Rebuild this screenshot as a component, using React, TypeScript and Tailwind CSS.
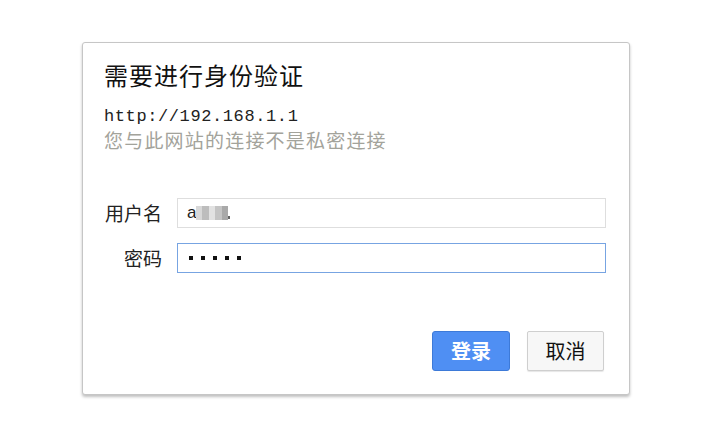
import React from "react";

export default function App() {
  const cjk = { fontFamily: '"Noto Sans CJK SC", "Noto Sans", sans-serif' };
  return (
    <div className="w-[707px] h-[439px] bg-white overflow-hidden pt-[42px] pl-[82px]" style={cjk}>
      <div className="w-[548px] h-[353px] bg-white border border-[#c6c6c6] rounded-[3px] shadow-[0_2px_3px_rgba(0,0,0,0.25)] pt-[16px] pl-[21px] pr-[22px] flex flex-col">
        <div className="text-[24px] leading-[32px] text-[#111] tracking-[1px]">需要进行身份验证</div>
        <div className="mt-[17px] text-[17px] leading-[18px] text-[#222] tracking-[0.6px]" style={{ fontFamily: '"Liberation Mono", monospace' }}>
          http://192.168.1.1
        </div>
        <div className="mt-[2px] text-[19px] leading-[24px] text-[#a3a39b] tracking-[1.2px]">您与此网站的连接不是私密连接</div>
        <div className="mt-[46px] flex items-center">
          <div className="w-[58px] text-right text-[19px] leading-[24px] text-[#222]">用户名</div>
          <div className="ml-[15px] w-[429px] h-[30px] border border-[#dedede] bg-white flex items-center pl-[9px]">
            <span className="text-[17px] text-[#222]" style={{ fontFamily: '"Liberation Sans", sans-serif' }}>a</span>
            <span className="w-[6px] h-[14px] bg-[#d8d8d8]"></span>
            <span className="w-[7px] h-[14px] bg-[#bdbdbd]"></span>
            <span className="w-[6px] h-[14px] bg-[#e2e2e2]"></span>
            <span className="w-[7px] h-[14px] bg-[#c4c4c4]"></span>
            <span className="w-[6px] h-[14px] bg-[#a9a9a9]"></span>
            <span className="w-[2px] h-[3px] bg-[#666] self-end mb-[8px]"></span>
          </div>
        </div>
        <div className="mt-[15px] flex items-center">
          <div className="w-[58px] text-right text-[19px] leading-[24px] text-[#222]">密码</div>
          <div className="ml-[15px] w-[429px] h-[30px] border border-[#77a4e2] bg-white flex items-center pl-[11px] gap-[8px]">
            <span className="w-[4px] h-[4px] bg-[#111]"></span>
            <span className="w-[4px] h-[4px] bg-[#111]"></span>
            <span className="w-[4px] h-[4px] bg-[#111]"></span>
            <span className="w-[4px] h-[4px] bg-[#111]"></span>
            <span className="w-[4px] h-[4px] bg-[#111]"></span>
          </div>
        </div>
        <div className="mt-[58px] flex justify-end gap-[17px] pr-[3px]">
          <button className="w-[78px] h-[40px] rounded-[3px] bg-[#4f8ff3] border border-[#3d7ad8] text-white text-[20px] font-bold">登录</button>
          <button className="w-[77px] h-[40px] rounded-[2px] bg-[#f7f7f7] border border-[#cfcfcf] shadow-[0_1px_1px_rgba(0,0,0,0.1)] text-[#111] text-[20px]">取消</button>
        </div>
      </div>
    </div>
  );
}
